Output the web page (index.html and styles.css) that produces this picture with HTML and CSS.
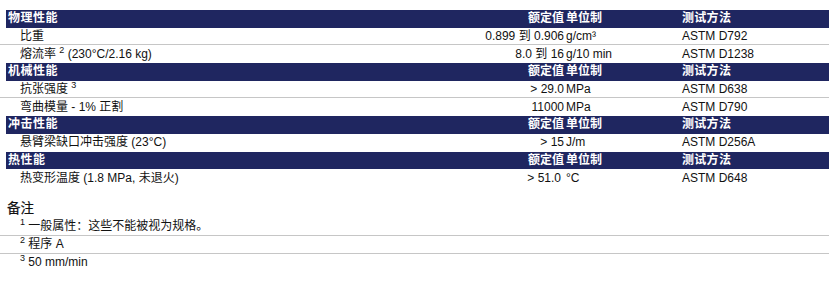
FILE: index.html
```html
<!DOCTYPE html>
<html lang="zh-CN">
<head>
    <meta charset="UTF-8">
    <meta name="viewport" content="width=device-width,initial-scale=1">
    <title>物理性能</title>
    <link rel="stylesheet" href="styles.css">
</head>
<body>
<main class="sheet">
    <div class="props">
        <div class="row head">
            <span class="name">物理性能</span>
            <span class="value">额定值</span>
            <span class="unit">单位制</span>
            <span class="method">测试方法</span>
        </div>
        <div class="row line">
            <span class="name">比重</span>
            <span class="value">0.899 到 0.906</span>
            <span class="unit">g/cm³</span>
            <span class="method">ASTM D792</span>
        </div>
        <div class="row">
            <span class="name">熔流率 <sup>2</sup> (230°C/2.16 kg)</span>
            <span class="value">8.0 到 16</span>
            <span class="unit">g/10 min</span>
            <span class="method">ASTM D1238</span>
        </div>

        <div class="row head">
            <span class="name">机械性能</span>
            <span class="value">额定值</span>
            <span class="unit">单位制</span>
            <span class="method">测试方法</span>
        </div>
        <div class="row line">
            <span class="name">抗张强度 <sup>3</sup></span>
            <span class="value">&gt; 29.0</span>
            <span class="unit">MPa</span>
            <span class="method">ASTM D638</span>
        </div>
        <div class="row">
            <span class="name">弯曲模量 - 1% 正割</span>
            <span class="value">11000</span>
            <span class="unit">MPa</span>
            <span class="method">ASTM D790</span>
        </div>

        <div class="row head">
            <span class="name">冲击性能</span>
            <span class="value">额定值</span>
            <span class="unit">单位制</span>
            <span class="method">测试方法</span>
        </div>
        <div class="row">
            <span class="name">悬臂梁缺口冲击强度 (23°C)</span>
            <span class="value">&gt; 15</span>
            <span class="unit">J/m</span>
            <span class="method">ASTM D256A</span>
        </div>

        <div class="row head">
            <span class="name">热性能</span>
            <span class="value">额定值</span>
            <span class="unit">单位制</span>
            <span class="method">测试方法</span>
        </div>
        <div class="row">
            <span class="name">热变形温度 (1.8 MPa, 未退火)</span>
            <span class="value short">&gt; 51.0</span>
            <span class="unit">°C</span>
            <span class="method">ASTM D648</span>
        </div>
    </div>

    <section class="notes">
        <h2>备注</h2>
        <ul>
            <li class="line"><sup>1</sup> 一般属性：这些不能被视为规格。</li>
            <li class="line"><sup>2</sup> 程序 A</li>
            <li><sup>3</sup> 50 mm/min</li>
        </ul>
    </section>
</main>
</body>
</html>
```

FILE: styles.css
```css
* {
    margin: 0;
    padding: 0;
    box-sizing: border-box;
}

body {
    background: #fff;
    color: #111;
    font-family: "Liberation Sans", "Noto Sans CJK SC", sans-serif;
    font-size: 12px;
}

.sheet {
    width: 829px;
    padding-top: 10px;
}

.row {
    display: grid;
    grid-template-columns: 1fr 120px 118px 147px;
    align-items: center;
    height: 17.7px;
    line-height: 17px;
    white-space: nowrap;
}

.row .name {
    padding-left: 20px;
}

.row .value {
    text-align: right;
}

.row .value.short {
    padding-right: 3px;
}

.row .unit {
    padding-left: 2px;
}

.row.line,
.notes li.line {
    border-bottom: 1px solid #c6c6c6;
}

.row.head {
    margin-left: 6px;
    background: #1f2660;
    color: #fff;
    font-weight: bold;
}

.row.head .name {
    padding-left: 2px;
    letter-spacing: 0.5px;
}

.row.head .method {
    letter-spacing: 0.3px;
}

sup {
    font-size: 9px;
    line-height: 0;
    vertical-align: 5px;
}

.notes {
    margin-top: 13px;
}

.notes h2 {
    font-size: 13.5px;
    font-weight: normal;
    line-height: 18px;
    padding-left: 7px;
    -webkit-text-stroke: 0.2px #111;
}

.notes ul {
    list-style: none;
}

.notes li {
    height: 18px;
    line-height: 17px;
    padding-left: 20px;
}
```
